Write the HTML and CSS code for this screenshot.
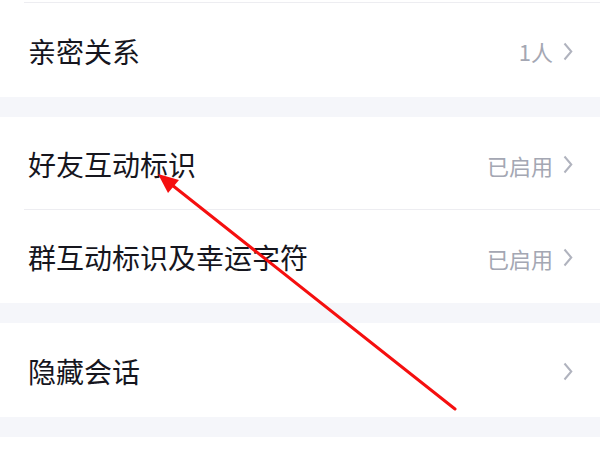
FILE: index.html
```html
<!DOCTYPE html>
<html lang="zh-CN">
<head>
    <meta charset="UTF-8">
    <meta name="viewport" content="width=device-width, initial-scale=1.0">
    <title>设置</title>
    <link rel="stylesheet" href="styles.css">
</head>
<body>

<div class="page">
    <div class="group">
        <div class="top-end"></div>
        <div class="row">
            <span class="title">亲密关系</span>
            <span class="extra">1人<svg class="chevron" width="10" height="19" viewBox="0 0 10 19"><path d="M1.5 1.5 L8.3 9.5 L1.5 17.5" fill="none" stroke="#b0b3be" stroke-width="2"/></svg></span>
        </div>
    </div>

    <div class="group">
        <div class="row divided">
            <span class="title">好友互动标识</span>
            <span class="extra">已启用<svg class="chevron" width="10" height="19" viewBox="0 0 10 19"><path d="M1.5 1.5 L8.3 9.5 L1.5 17.5" fill="none" stroke="#b0b3be" stroke-width="2"/></svg></span>
        </div>
        <div class="row">
            <span class="title">群互动标识及幸运字符</span>
            <span class="extra">已启用<svg class="chevron" width="10" height="19" viewBox="0 0 10 19"><path d="M1.5 1.5 L8.3 9.5 L1.5 17.5" fill="none" stroke="#b0b3be" stroke-width="2"/></svg></span>
        </div>
    </div>

    <div class="group">
        <div class="row">
            <span class="title">隐藏会话</span>
            <span class="extra"><svg class="chevron" width="10" height="19" viewBox="0 0 10 19"><path d="M1.5 1.5 L8.3 9.5 L1.5 17.5" fill="none" stroke="#b0b3be" stroke-width="2"/></svg></span>
        </div>
    </div>

    <div class="group last"></div>

    <!-- annotation arrow drawn over the list -->
    <svg class="arrow" width="600" height="450" viewBox="0 0 600 450">
        <line x1="455" y1="409" x2="172" y2="185" stroke="#f50f0f" stroke-width="3" stroke-linecap="round"/>
        <polygon points="158,174 179,180 168,193" fill="#f50f0f"/>
    </svg>
</div>

</body>
</html>
```

FILE: styles.css
```css
body {
    margin: 0;
    font-family: "Noto Sans CJK SC", "Noto Sans", sans-serif;
    background-color: #f5f6fa;
}

.page {
    position: relative;
    width: 600px;
    height: 450px;
    overflow: hidden;
    display: flex;
    flex-direction: column;
    gap: 20px;
}

.group {
    background-color: #ffffff;
    display: flex;
    flex-direction: column;
}

.group.last {
    flex: 1;
}

.top-end {
    height: 2px;
    margin-left: 24px;
    border-bottom: 1px solid #ededf1;
}

.row {
    height: 93px;
    padding: 0 27px 0 28px;
    display: flex;
    align-items: center;
    justify-content: space-between;
    box-sizing: border-box;
}

.group:first-child .row,
.group:nth-child(3) .row {
    height: 94px;
}

.row.divided {
    position: relative;
}

.row.divided::after {
    content: "";
    position: absolute;
    left: 24px;
    right: 0;
    bottom: 0;
    border-bottom: 1px solid #ededf1;
}

.title {
    font-size: 28px;
    color: #16161e;
    padding-top: 1px;
}

.extra {
    display: flex;
    align-items: center;
    font-size: 22px;
    color: #a4a7b3;
    padding-top: 2px;
}

.chevron {
    margin-left: 10px;
}

.arrow {
    position: absolute;
    left: 0;
    top: 0;
}
```
